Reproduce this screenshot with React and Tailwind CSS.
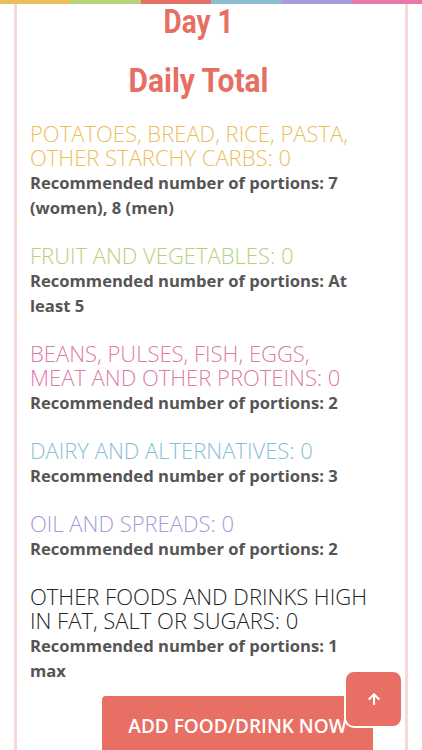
import React from 'react';

const groups = [
    { title: ['POTATOES, BREAD, RICE, PASTA,', 'OTHER STARCHY CARBS: 0'], color: 'text-[#edbd5a] font-light', rec: ['Recommended number of portions: 7', '(women), 8 (men)'] },
    { title: ['FRUIT AND VEGETABLES: 0'], color: 'text-[#b3d27a] font-light', rec: ['Recommended number of portions: At', 'least 5'] },
    { title: ['BEANS, PULSES, FISH, EGGS,', 'MEAT AND OTHER PROTEINS: 0'], color: 'text-[#e07aa7] font-light', rec: ['Recommended number of portions: 2'] },
    { title: ['DAIRY AND ALTERNATIVES: 0'], color: 'text-[#86bed4] font-light', rec: ['Recommended number of portions: 3'] },
    { title: ['OIL AND SPREADS: 0'], color: 'text-[#a89ad8] font-light', rec: ['Recommended number of portions: 2'] },
    { title: ['OTHER FOODS AND DRINKS HIGH', 'IN FAT, SALT OR SUGARS: 0'], color: 'text-[#222222] font-light', rec: ['Recommended number of portions: 1', 'max'] },
];

function App() {
    return (
        <div className="relative h-[750px] overflow-hidden bg-white font-['Open_Sans',sans-serif]">
            {/* Rainbow strip */}
            <div className="flex h-[4px]">
                <div className="flex-1 bg-[#ebbd5b]" />
                <div className="flex-1 bg-[#b5d37a]" />
                <div className="flex-1 bg-[#e36f65]" />
                <div className="flex-1 bg-[#8bbed3]" />
                <div className="flex-1 bg-[#a99bdb]" />
                <div className="flex-1 bg-[#e47aaa]" />
            </div>

            <div className="mx-[14px] min-h-[746px] border-x-[3px] border-[#f8d8d8] pl-[13px] pr-[38px]">
                <h1 className="-mt-[2px] scale-x-[0.82] text-center text-[34px] leading-[38px] font-bold text-[#e66e63] font-['Roboto',sans-serif]">
                    Day 1
                </h1>
                <h2 className="mt-[21px] scale-x-[0.88] text-center text-[34px] leading-[38px] font-bold text-[#e66e63] font-['Roboto',sans-serif]">
                    Daily Total
                </h2>

                <div className="mt-[22px] flex flex-col gap-[23px]">
                    {groups.map((g) => (
                        <div key={g.title[0]}>
                            <p className={`text-[22px] leading-[24px] whitespace-nowrap ${g.color}`}>
                                {g.title.map((line) => (
                                    <span key={line} className="block">{line}</span>
                                ))}
                            </p>
                            <p className="mt-[1px] text-[16.6px] leading-[25px] font-bold whitespace-nowrap text-[#555555]">
                                {g.rec.map((line) => (
                                    <span key={line} className="block">{line}</span>
                                ))}
                            </p>
                        </div>
                    ))}
                </div>

                <div className="mt-[13px] ml-[72px]">
                    <button className="h-[58px] w-[271px] rounded-t-[4px] bg-[#e86f64] pt-[2px] text-[19px] font-semibold text-white">
                        ADD FOOD/DRINK NOW
                    </button>
                </div>
            </div>

            {/* Back to top */}
            <button className="absolute left-[344px] top-[670px] flex h-[58px] w-[59px] items-center justify-center rounded-[10px] border-[2px] border-white bg-[#e86f64]">
                <svg width="12" height="14" viewBox="0 0 448 512" fill="white">
                    <path d="M34.9 289.5l-22.2-22.2c-9.4-9.4-9.4-24.6 0-33.9L207 39c9.4-9.4 24.6-9.4 33.9 0l194.3 194.3c9.4 9.4 9.4 24.6 0 33.9L413 289.4c-9.5 9.5-25 9.3-34.3-.4L264 168.6V456c0 13.3-10.7 24-24 24h-32c-13.3 0-24-10.7-24-24V168.6L69.2 289.1c-9.3 9.8-24.8 10-34.3.4z" />
                </svg>
            </button>
        </div>
    );
}

export default App;
